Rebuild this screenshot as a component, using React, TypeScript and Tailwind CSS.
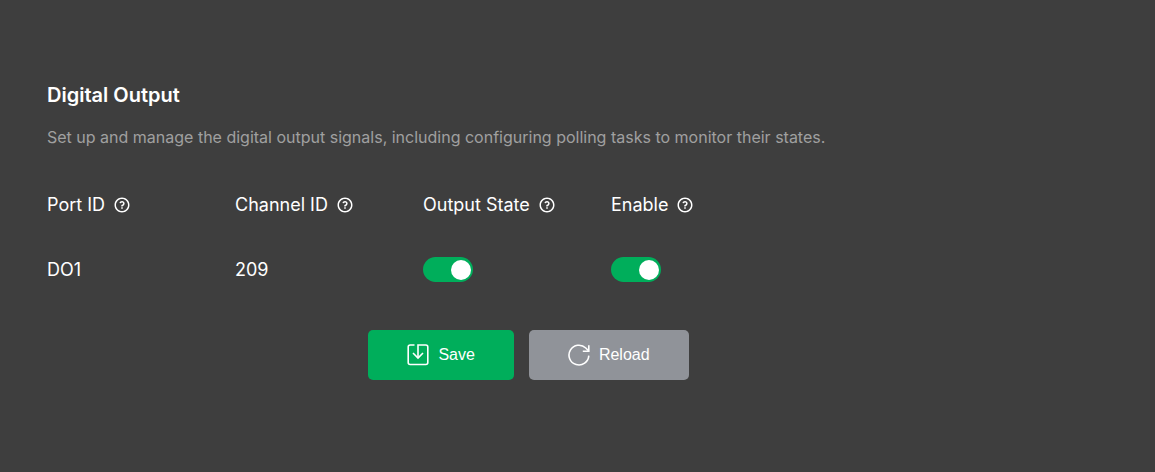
import { useState } from 'react'
import type { ReactNode } from 'react'
import { RiQuestionLine } from 'react-icons/ri'

interface Port {
  id: string
  channel: number
  output: boolean
  enabled: boolean
}

const INITIAL_PORTS: Port[] = [{ id: 'DO1', channel: 209, output: true, enabled: true }]

const COLUMNS = ['Port ID', 'Channel ID', 'Output State', 'Enable']

interface SwitchProps {
  label: string
  checked: boolean
  onChange: (checked: boolean) => void
}

function Switch({ label, checked, onChange }: SwitchProps) {
  return (
    <input
      type="checkbox"
      role="switch"
      aria-label={label}
      checked={checked}
      onChange={(e) => onChange(e.target.checked)}
      className="flex h-[25px] w-[50px] cursor-pointer appearance-none items-center rounded-full bg-[#909399] px-0.5 before:size-5 before:rounded-full before:bg-white checked:justify-end checked:bg-[#00ae5b]"
    />
  )
}

function SaveIcon() {
  return (
    <svg className="size-[22px]" viewBox="0 0 22 22" fill="none" stroke="currentColor" strokeWidth="1.6" aria-hidden="true">
      <path d="M7.5 1H3.2C2 1 1.2 1.8 1.2 3v15.5c0 1.2.8 2 2 2h15.6c1.2 0 2-.8 2-2V3c0-1.2-.8-2-2-2H11v12.8" />
      <path d="M6 9l5 5 5-5" />
    </svg>
  )
}

function ReloadIcon() {
  return (
    <svg className="size-[22px]" viewBox="0 0 22 22" fill="none" stroke="currentColor" strokeWidth="1.6" aria-hidden="true">
      <path d="M20.8 11.6A9.9 9.9 0 1 1 17.8 4l2.9 3" />
      <path d="M20.8 1.2v6h-6" />
    </svg>
  )
}

interface ButtonProps {
  className: string
  icon: ReactNode
  children: ReactNode
  onClick?: () => void
}

function Button({ className, icon, children, onClick }: ButtonProps) {
  return (
    <button
      type="button"
      onClick={onClick}
      className={`flex h-[50px] cursor-pointer items-center justify-center gap-[9px] rounded-[5px] px-[39px] font-['Liberation_Sans',sans-serif] text-base text-white ${className}`}
    >
      {icon}
      {children}
    </button>
  )
}

export default function App() {
  const [ports, setPorts] = useState(INITIAL_PORTS)

  const update = (id: string, patch: Partial<Port>) =>
    setPorts((rows) => rows.map((row) => (row.id === id ? { ...row, ...patch } : row)))

  return (
    <main className="min-h-screen bg-[#3e3e3e] py-20 pr-[145px] pl-[47px] font-['Inter',sans-serif] text-white">
      <h1 className="text-xl leading-[30px] font-semibold">Digital Output</h1>
      <p className="mt-[15px] text-base text-[#a0a0a0]">
        Set up and manage the digital output signals, including configuring polling tasks to monitor their states.
      </p>

      <table className="mt-[23px] table-fixed text-left text-lg">
        <thead>
          <tr className="h-[65px]">
            {COLUMNS.map((name) => (
              <th key={name} className="w-[188px] p-0 font-normal">
                <span className="flex items-center gap-2">
                  {name}
                  <RiQuestionLine className="size-[18px]" aria-hidden="true" />
                </span>
              </th>
            ))}
          </tr>
        </thead>
        <tbody>
          {ports.map((port) => (
            <tr key={port.id} className="h-[65px]">
              <td className="p-0">{port.id}</td>
              <td className="p-0">{port.channel}</td>
              <td className="p-0">
                <Switch
                  label={`${port.id} output state`}
                  checked={port.output}
                  onChange={(output) => update(port.id, { output })}
                />
              </td>
              <td className="p-0">
                <Switch
                  label={`${port.id} enable`}
                  checked={port.enabled}
                  onChange={(enabled) => update(port.id, { enabled })}
                />
              </td>
            </tr>
          ))}
        </tbody>
      </table>

      <div className="mt-7 flex justify-center gap-[15px]">
        <Button className="bg-[#00ae5b]" icon={<SaveIcon />}>
          Save
        </Button>
        <Button className="bg-[#909399]" icon={<ReloadIcon />} onClick={() => setPorts(INITIAL_PORTS)}>
          Reload
        </Button>
      </div>
    </main>
  )
}
